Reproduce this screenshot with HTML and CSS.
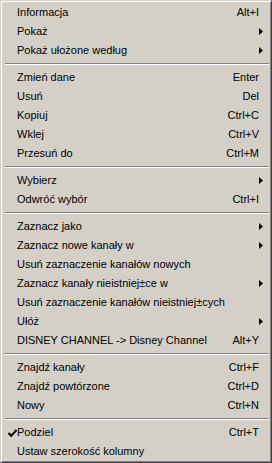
FILE: index.html
```html
<!DOCTYPE html>
<html lang="pl">
<head>
<meta charset="utf-8">
<title>Menu</title>
<link rel="stylesheet" href="styles.css">
</head>
<body>
<div class="menu">
  <div class="item"><span class="label">Informacja</span><span class="key">Alt+I</span></div>
  <div class="item"><span class="label">Pokaż</span><svg class="arrow" viewBox="0 0 4 7" width="4" height="7"><path d="M0 0 L4 3.5 L0 7 Z"/></svg></div>
  <div class="item"><span class="label">Pokaż ułożone według</span><svg class="arrow" viewBox="0 0 4 7" width="4" height="7"><path d="M0 0 L4 3.5 L0 7 Z"/></svg></div>
  <div class="sep"></div>
  <div class="item"><span class="label">Zmień dane</span><span class="key">Enter</span></div>
  <div class="item"><span class="label">Usuń</span><span class="key">Del</span></div>
  <div class="item"><span class="label">Kopiuj</span><span class="key">Ctrl+C</span></div>
  <div class="item"><span class="label">Wklej</span><span class="key">Ctrl+V</span></div>
  <div class="item"><span class="label">Przesuń do</span><span class="key">Ctrl+M</span></div>
  <div class="sep"></div>
  <div class="item"><span class="label">Wybierz</span><svg class="arrow" viewBox="0 0 4 7" width="4" height="7"><path d="M0 0 L4 3.5 L0 7 Z"/></svg></div>
  <div class="item"><span class="label">Odwróć wybór</span><span class="key">Ctrl+I</span></div>
  <div class="sep"></div>
  <div class="item"><span class="label">Zaznacz jako</span><svg class="arrow" viewBox="0 0 4 7" width="4" height="7"><path d="M0 0 L4 3.5 L0 7 Z"/></svg></div>
  <div class="item"><span class="label">Zaznacz nowe kanały w</span><svg class="arrow" viewBox="0 0 4 7" width="4" height="7"><path d="M0 0 L4 3.5 L0 7 Z"/></svg></div>
  <div class="item"><span class="label">Usuń zaznaczenie kanałów nowych</span></div>
  <div class="item"><span class="label">Zaznacz kanały nieistniej±ce w</span><svg class="arrow" viewBox="0 0 4 7" width="4" height="7"><path d="M0 0 L4 3.5 L0 7 Z"/></svg></div>
  <div class="item"><span class="label">Usuń zaznaczenie kanałów nieistniej±cych</span></div>
  <div class="item"><span class="label">Ułóż</span><svg class="arrow" viewBox="0 0 4 7" width="4" height="7"><path d="M0 0 L4 3.5 L0 7 Z"/></svg></div>
  <div class="item"><span class="label">DISNEY CHANNEL -&gt; Disney Channel</span><span class="key">Alt+Y</span></div>
  <div class="sep"></div>
  <div class="item"><span class="label">Znajdź kanały</span><span class="key">Ctrl+F</span></div>
  <div class="item"><span class="label">Znajdź powtórzone</span><span class="key">Ctrl+D</span></div>
  <div class="item"><span class="label">Nowy</span><span class="key">Ctrl+N</span></div>
  <div class="sep"></div>
  <div class="item checked"><svg class="check" viewBox="0 0 9 8" width="9" height="8"><path d="M0.5 4 L3.2 6.8 L8.5 1" fill="none" stroke="#000" stroke-width="2"/></svg><span class="label">Podziel</span><span class="key">Ctrl+T</span></div>
  <div class="item"><span class="label">Ustaw szerokość kolumny</span></div>
</div>
</body>
</html>
```

FILE: styles.css
```css
html, body {
  margin: 0;
  padding: 0;
  background: #d4d0c8;
}

.menu {
  box-sizing: border-box;
  width: 272px;
  height: 463px;
  background: #d4d0c8;
  border-top: 1px solid #d4d0c8;
  border-left: 1px solid #d4d0c8;
  border-right: 1px solid #404040;
  border-bottom: 1px solid #404040;
  box-shadow: inset 1px 1px 0 #ffffff, inset -1px -1px 0 #808080;
  padding: 2px 2px 1px 2px;
  font-family: "Liberation Sans", Arial, sans-serif;
  font-size: 11px;
  color: #000;
  display: flex;
  flex-direction: column;
}

.item {
  position: relative;
  display: flex;
  align-items: center;
  height: 19px;
  line-height: 19px;
  padding: 0 5px 0 14px;
  white-space: nowrap;
}

.label {
  flex: 1;
}

.key {
  margin-right: 5px;
}

.arrow {
  display: block;
  fill: #000;
  margin-right: 1px;
}

.check {
  position: absolute;
  left: 5px;
  top: 6px;
}

.sep {
  height: 8px;
  margin: 0 0 0 2px;
  position: relative;
}

.sep::before {
  content: "";
  position: absolute;
  left: 0;
  right: 0;
  top: 3px;
  height: 1px;
  background: #808080;
  box-shadow: 0 1px 0 #ffffff;
}
```
